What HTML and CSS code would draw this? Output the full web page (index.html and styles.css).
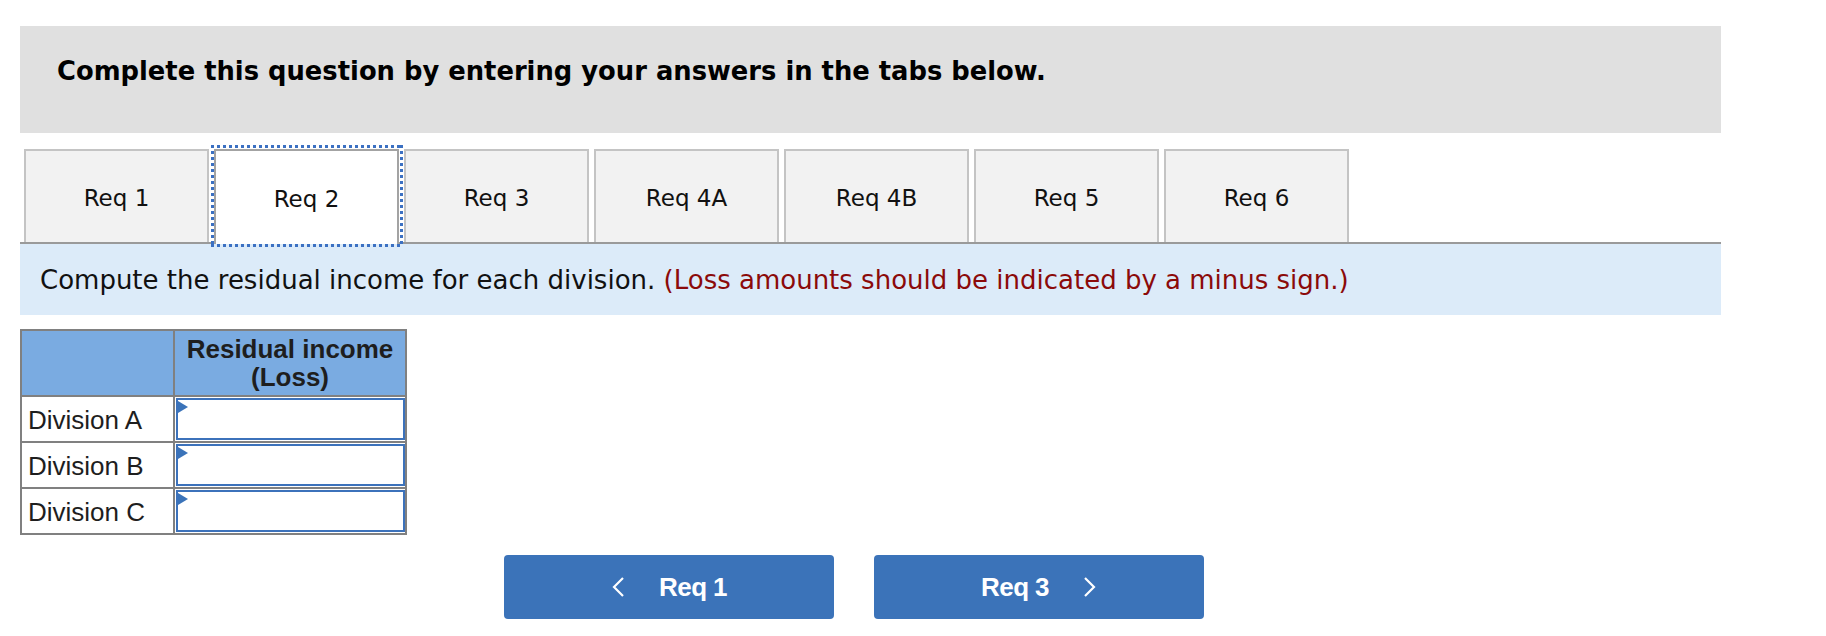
FILE: index.html
```html
<!DOCTYPE html>
<html lang="en">
<head>
<meta charset="utf-8">
<title>Residual income</title>
<link rel="stylesheet" href="styles.css">
</head>
<body>
<div class="page">
  <div class="banner">
    <h1 class="banner-title">Complete this question by entering your answers in the tabs below.</h1>
  </div>

  <div class="tabs">
    <div class="tab">Req 1</div>
    <div class="tab tab-active">Req 2</div>
    <div class="tab">Req 3</div>
    <div class="tab">Req 4A</div>
    <div class="tab">Req 4B</div>
    <div class="tab">Req 5</div>
    <div class="tab">Req 6</div>
  </div>

  <div class="instruction">
    <span>Compute the residual income for each division.</span>&nbsp;<span class="note">(Loss amounts should be indicated by a minus sign.)</span>
  </div>

  <table class="grid">
    <tr class="head">
      <th class="label-col"></th>
      <th class="value-col">Residual income<br>(Loss)</th>
    </tr>
    <tr>
      <td class="label">Division A</td>
      <td class="cell"><div class="input"><span class="marker"></span></div></td>
    </tr>
    <tr>
      <td class="label">Division B</td>
      <td class="cell"><div class="input"><span class="marker"></span></div></td>
    </tr>
    <tr>
      <td class="label">Division C</td>
      <td class="cell"><div class="input"><span class="marker"></span></div></td>
    </tr>
  </table>

  <div class="nav">
    <button class="nav-btn">
      <svg class="chev" width="14" height="20" viewBox="0 0 14 20"><polyline points="12,1 3,10 12,19" fill="none" stroke="#fff" stroke-width="2.2"/></svg>
      <span class="nav-text">Req 1</span>
    </button>
    <button class="nav-btn">
      <span class="nav-text">Req 3</span>
      <svg class="chev" width="14" height="20" viewBox="0 0 14 20"><polyline points="2,1 11,10 2,19" fill="none" stroke="#fff" stroke-width="2.2"/></svg>
    </button>
  </div>
</div>
</body>
</html>
```

FILE: styles.css
```css
html, body {
  margin: 0;
  padding: 0;
  background: #ffffff;
}

body {
  font-family: "DejaVu Sans", Verdana, sans-serif;
  color: #000;
}

.page {
  width: 1701px;
  padding: 26px 0 0 20px;
}

.banner {
  box-sizing: border-box;
  height: 107px;
  background: #e0e0e0;
  padding: 30px 0 0 37px;
}

.banner-title {
  margin: 0;
  font-family: "DejaVu Sans", Verdana, sans-serif;
  font-weight: bold;
  font-size: 25.8px;
  line-height: 30px;
  color: #000;
}

.tabs {
  display: flex;
  gap: 5px;
  margin-top: 16px;
  padding-left: 4px;
  border-bottom: 2px solid #9a9a9a;
}

.tab {
  box-sizing: border-box;
  width: 185px;
  height: 93px;
  border: 2px solid #c4c4c4;
  border-bottom: none;
  background: #f2f2f2;
  display: flex;
  align-items: center;
  justify-content: center;
  font-size: 23px;
  color: #111;
  padding-top: 2px;
}

.tab-active {
  position: relative;
  background: #ffffff;
  border-color: #a3a3a3;
  height: 95px;
  margin-bottom: -2px;
}

.tab-active::after {
  content: "";
  position: absolute;
  top: -6px;
  left: -5px;
  right: -6px;
  bottom: -3px;
  background:
    repeating-linear-gradient(90deg, #3b70c2 0 3px, transparent 3px 6px) top left / 100% 3px no-repeat,
    repeating-linear-gradient(90deg, #3b70c2 0 3px, transparent 3px 6px) bottom left / 100% 3px no-repeat,
    repeating-linear-gradient(180deg, #3b70c2 0 3px, transparent 3px 6px) top left / 3px 100% no-repeat,
    repeating-linear-gradient(180deg, #3b70c2 0 3px, transparent 3px 6px) top right / 3px 100% no-repeat;
}

.instruction {
  box-sizing: border-box;
  height: 71px;
  background: #dcebf9;
  display: flex;
  align-items: center;
  padding-left: 20px;
  font-size: 26px;
  color: #111;
  white-space: nowrap;
}

.note {
  color: #8b0a0a;
}

.grid {
  margin-top: 14px;
  border-collapse: collapse;
  font-family: "Liberation Sans", Arial, sans-serif;
  font-size: 26px;
}

.grid th,
.grid td {
  border: 2px solid #808080;
  padding: 0;
}

.grid .head th {
  background: #7aabe1;
  height: 66px;
  vertical-align: top;
  font-weight: bold;
  color: #1e1e1e;
  line-height: 28px;
  padding-top: 4px;
  box-sizing: border-box;
}

.label-col {
  width: 153px;
}

.value-col {
  width: 232px;
  text-align: center;
}

.grid .label {
  height: 44px;
  padding: 3px 6px 0 6px;
  color: #1e1e1e;
  white-space: nowrap;
  box-sizing: border-box;
}

.grid .cell {
  padding: 0;
}

.input {
  position: relative;
  box-sizing: border-box;
  height: 42px;
  margin: 1px 0 1px 1px;
  border: 2px solid #3c72bb;
  background: #fff;
}

.marker {
  position: absolute;
  top: 1px;
  left: 0;
  width: 0;
  height: 0;
  border-top: 6px solid transparent;
  border-bottom: 6px solid transparent;
  border-left: 10px solid #3b73b9;
}

.nav {
  display: flex;
  gap: 40px;
  margin-top: 20px;
  padding-left: 484px;
}

.nav-btn {
  width: 330px;
  height: 64px;
  border: none;
  border-radius: 4px;
  background: #3b73b9;
  color: #fff;
  display: flex;
  align-items: center;
  justify-content: center;
  gap: 34px;
  font-family: "Liberation Sans", Arial, sans-serif;
  font-weight: bold;
  font-size: 26px;
  padding: 0;
  cursor: pointer;
}

.nav-text {
  letter-spacing: -0.6px;
}

.chev {
  display: block;
}
```
